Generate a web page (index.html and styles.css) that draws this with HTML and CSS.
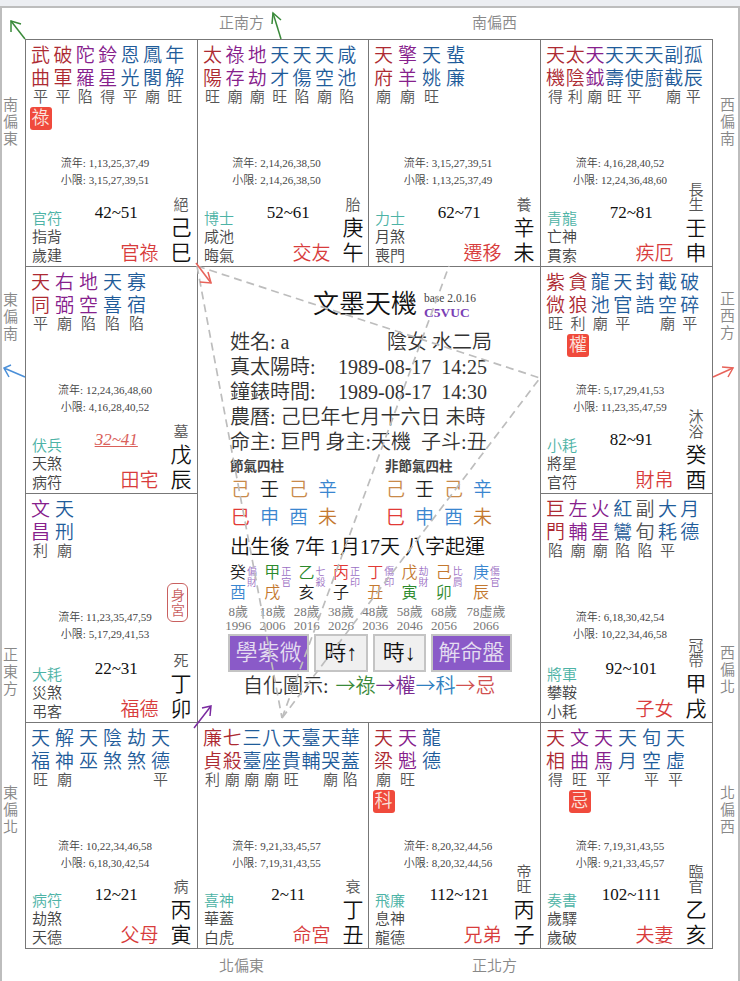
FILE: index.html
```html
<!DOCTYPE html>
<html lang="zh-Hant">
<head>
<meta charset="utf-8">
<title>文墨天機</title>
<link rel="stylesheet" href="styles.css">
</head>
<body>
<div class="frame">
  <div class="corner"></div>
  <div class="compass-h"><span>正南方</span><span>南偏西</span></div>
  <div class="corner"></div>

  <div class="compass-v left">
    <div class="slot t58"><span>南偏東</span></div>
    <div class="slot t25"><span>東偏南</span></div>
    <div class="slot t153"><span>正東方</span></div>
    <div class="slot t62"><span>東偏北</span></div>
  </div>

  <div class="chart">
    <section class="cell">
      <div class="stars g7">
        <div class="star red"><span class="nm">武曲</span><span class="br">平</span><span class="hua">祿</span></div>
        <div class="star red"><span class="nm">破軍</span><span class="br">平</span></div>
        <div class="star pur"><span class="nm">陀羅</span><span class="br">陷</span></div>
        <div class="star pur"><span class="nm">鈴星</span><span class="br">得</span></div>
        <div class="star blu"><span class="nm">恩光</span><span class="br">平</span></div>
        <div class="star blu"><span class="nm">鳳閣</span><span class="br">廟</span></div>
        <div class="star blu"><span class="nm">年解</span><span class="br">旺</span></div>
      </div>
      <p class="nums">流年: 1,13,25,37,49<br>小限: 3,15,27,39,51</p>
      <div class="foot">
        <div class="gods"><span class="teal">官符</span><span>指背</span><span>歲建</span></div>
        <div class="mid"><span class="decade">42~51</span><span class="palace">官祿</span></div>
        <div class="side"><span class="phase">絕</span><span class="gz">己巳</span></div>
      </div>
    </section>
    <section class="cell">
      <div class="stars g7">
        <div class="star red"><span class="nm">太陽</span><span class="br">旺</span></div>
        <div class="star pur"><span class="nm">祿存</span><span class="br">廟</span></div>
        <div class="star pur"><span class="nm">地劫</span><span class="br">廟</span></div>
        <div class="star blu"><span class="nm">天才</span><span class="br">旺</span></div>
        <div class="star blu"><span class="nm">天傷</span><span class="br">陷</span></div>
        <div class="star blu"><span class="nm">天空</span><span class="br">廟</span></div>
        <div class="star blu"><span class="nm">咸池</span><span class="br">陷</span></div>
      </div>
      <p class="nums">流年: 2,14,26,38,50<br>小限: 2,14,26,38,50</p>
      <div class="foot">
        <div class="gods"><span class="teal">博士</span><span>咸池</span><span>晦氣</span></div>
        <div class="mid"><span class="decade">52~61</span><span class="palace">交友</span></div>
        <div class="side"><span class="phase">胎</span><span class="gz">庚午</span></div>
      </div>
    </section>
    <section class="cell">
      <div class="stars">
        <div class="star red"><span class="nm">天府</span><span class="br">廟</span></div>
        <div class="star pur"><span class="nm">擎羊</span><span class="br">廟</span></div>
        <div class="star blu"><span class="nm">天姚</span><span class="br">旺</span></div>
        <div class="star blu"><span class="nm">蜚廉</span><span class="br">&nbsp;</span></div>
      </div>
      <p class="nums">流年: 3,15,27,39,51<br>小限: 1,13,25,37,49</p>
      <div class="foot">
        <div class="gods"><span class="teal">力士</span><span>月煞</span><span>喪門</span></div>
        <div class="mid"><span class="decade">62~71</span><span class="palace">遷移</span></div>
        <div class="side"><span class="phase">養</span><span class="gz">辛未</span></div>
      </div>
    </section>
    <section class="cell">
      <div class="stars g8">
        <div class="star red"><span class="nm">天機</span><span class="br">得</span></div>
        <div class="star red"><span class="nm">太陰</span><span class="br">利</span></div>
        <div class="star pur"><span class="nm">天鉞</span><span class="br">廟</span></div>
        <div class="star blu"><span class="nm">天壽</span><span class="br">旺</span></div>
        <div class="star blu"><span class="nm">天使</span><span class="br">平</span></div>
        <div class="star blu"><span class="nm">天廚</span><span class="br">&nbsp;</span></div>
        <div class="star blu"><span class="nm">副截</span><span class="br">廟</span></div>
        <div class="star blu"><span class="nm">孤辰</span><span class="br">平</span></div>
      </div>
      <p class="nums">流年: 4,16,28,40,52<br>小限: 12,24,36,48,60</p>
      <div class="foot">
        <div class="gods"><span class="teal">青龍</span><span>亡神</span><span>貫索</span></div>
        <div class="mid"><span class="decade">72~81</span><span class="palace">疾厄</span></div>
        <div class="side"><span class="phase">長生</span><span class="gz">壬申</span></div>
      </div>
    </section>

    <section class="cell">
      <div class="stars">
        <div class="star red"><span class="nm">天同</span><span class="br">平</span></div>
        <div class="star pur"><span class="nm">右弼</span><span class="br">廟</span></div>
        <div class="star pur"><span class="nm">地空</span><span class="br">陷</span></div>
        <div class="star blu"><span class="nm">天喜</span><span class="br">陷</span></div>
        <div class="star blu"><span class="nm">寡宿</span><span class="br">陷</span></div>
      </div>
      <p class="nums">流年: 12,24,36,48,60<br>小限: 4,16,28,40,52</p>
      <div class="foot">
        <div class="gods"><span class="teal">伏兵</span><span>天煞</span><span>病符</span></div>
        <div class="mid"><span class="decade now">32~41</span><span class="palace">田宅</span></div>
        <div class="side"><span class="phase">墓</span><span class="gz">戊辰</span></div>
      </div>
    </section>

    <main class="center">
      <header class="title-row">
        <h1 class="title">文墨天機</h1>
        <div class="ver"><span class="base">base 2.0.16</span><span class="code">C5VUC</span></div>
      </header>
      <div class="info">
        <div class="name-row"><span>姓名: a</span><span>陰女 水二局</span></div>
        <div class="time-row"><span>真太陽時:</span><span>1989-08-17&nbsp;&nbsp;14:25</span></div>
        <div class="time-row"><span>鐘錶時間:</span><span>1989-08-17&nbsp;&nbsp;14:30</span></div>
        <div>農曆: 己巳年七月十六日 未時</div>
        <div>命主: 巨門 身主:天機&nbsp;&nbsp;子斗:丑</div>
      </div>
      <div class="pillars">
        <div class="pgroup">
          <h2>節氣四柱</h2>
          <div class="pgrid">
            <span class="earth">己</span><span class="dark">壬</span><span class="earth">己</span><span class="water">辛</span>
            <span class="fire">巳</span><span class="water">申</span><span class="water">酉</span><span class="earth2">未</span>
          </div>
        </div>
        <div class="pgroup">
          <h2>非節氣四柱</h2>
          <div class="pgrid">
            <span class="earth">己</span><span class="dark">壬</span><span class="earth">己</span><span class="water">辛</span>
            <span class="fire">巳</span><span class="water">申</span><span class="water">酉</span><span class="earth2">未</span>
          </div>
        </div>
      </div>
      <div class="qiyun">出生後 7年 1月17天 八字起運</div>
      <div class="luck">
        <div class="lk"><div class="lk-top"><span class="lk-gz"><span class="dark">癸</span><span class="water">酉</span></span><span class="tag">偏財</span></div><span class="age">8歲<br>1996</span></div>
        <div class="lk"><div class="lk-top"><span class="lk-gz"><span class="wood">甲</span><span class="earth2">戌</span></span><span class="tag">正官</span></div><span class="age">18歲<br>2006</span></div>
        <div class="lk"><div class="lk-top"><span class="lk-gz"><span class="wood">乙</span><span class="dark">亥</span></span><span class="tag">七殺</span></div><span class="age">28歲<br>2016</span></div>
        <div class="lk"><div class="lk-top"><span class="lk-gz"><span class="fire">丙</span><span class="dark">子</span></span><span class="tag">正印</span></div><span class="age">38歲<br>2026</span></div>
        <div class="lk"><div class="lk-top"><span class="lk-gz"><span class="fire">丁</span><span class="earth2">丑</span></span><span class="tag">傷印</span></div><span class="age">48歲<br>2036</span></div>
        <div class="lk"><div class="lk-top"><span class="lk-gz"><span class="earth2">戊</span><span class="wood">寅</span></span><span class="tag">劫財</span></div><span class="age">58歲<br>2046</span></div>
        <div class="lk"><div class="lk-top"><span class="lk-gz"><span class="earth2">己</span><span class="wood">卯</span></span><span class="tag">比肩</span></div><span class="age">68歲<br>2056</span></div>
        <div class="lk last"><div class="lk-top"><span class="lk-gz"><span class="water">庚</span><span class="earth2">辰</span></span><span class="tag">傷官</span></div><span class="age">78虛歲<br>2066</span></div>
      </div>
      <div class="btns">
        <button class="btn purple" type="button">學紫微</button>
        <button class="btn plain" type="button">時↑</button>
        <button class="btn plain" type="button">時↓</button>
        <button class="btn purple" type="button">解命盤</button>
      </div>
      <div class="legend">自化圖示: <span class="lg-g">→祿</span><span class="lg-p">→權</span><span class="lg-b">→科</span><span class="lg-r">→忌</span></div>
    </main>

    <section class="cell">
      <div class="stars g7">
        <div class="star red"><span class="nm">紫微</span><span class="br">旺</span></div>
        <div class="star red"><span class="nm">貪狼</span><span class="br">利</span><span class="hua">權</span></div>
        <div class="star blu"><span class="nm">龍池</span><span class="br">廟</span></div>
        <div class="star blu"><span class="nm">天官</span><span class="br">平</span></div>
        <div class="star blu"><span class="nm">封誥</span><span class="br">&nbsp;</span></div>
        <div class="star blu"><span class="nm">截空</span><span class="br">廟</span></div>
        <div class="star blu"><span class="nm">破碎</span><span class="br">平</span></div>
      </div>
      <p class="nums">流年: 5,17,29,41,53<br>小限: 11,23,35,47,59</p>
      <div class="foot">
        <div class="gods"><span class="teal">小耗</span><span>將星</span><span>官符</span></div>
        <div class="mid"><span class="decade">82~91</span><span class="palace">財帛</span></div>
        <div class="side"><span class="phase">沐浴</span><span class="gz">癸酉</span></div>
      </div>
    </section>

    <section class="cell">
      <div class="stars">
        <div class="star pur"><span class="nm">文昌</span><span class="br">利</span></div>
        <div class="star blu"><span class="nm">天刑</span><span class="br">廟</span></div>
      </div>
      <span class="shen">身宮</span>
      <p class="nums">流年: 11,23,35,47,59<br>小限: 5,17,29,41,53</p>
      <div class="foot">
        <div class="gods"><span class="teal">大耗</span><span>災煞</span><span>弔客</span></div>
        <div class="mid"><span class="decade">22~31</span><span class="palace">福德</span></div>
        <div class="side"><span class="phase">死</span><span class="gz">丁卯</span></div>
      </div>
    </section>

    <section class="cell">
      <div class="stars g7">
        <div class="star red"><span class="nm">巨門</span><span class="br">陷</span></div>
        <div class="star pur"><span class="nm">左輔</span><span class="br">廟</span></div>
        <div class="star pur"><span class="nm">火星</span><span class="br">廟</span></div>
        <div class="star blu"><span class="nm">紅鸞</span><span class="br">陷</span></div>
        <div class="star gry"><span class="nm">副旬</span><span class="br">陷</span></div>
        <div class="star blu"><span class="nm">大耗</span><span class="br">平</span></div>
        <div class="star blu"><span class="nm">月德</span><span class="br">&nbsp;</span></div>
      </div>
      <p class="nums">流年: 6,18,30,42,54<br>小限: 10,22,34,46,58</p>
      <div class="foot">
        <div class="gods"><span class="teal">將軍</span><span>攀鞍</span><span>小耗</span></div>
        <div class="mid"><span class="decade">92~101</span><span class="palace">子女</span></div>
        <div class="side"><span class="phase">冠帶</span><span class="gz">甲戌</span></div>
      </div>
    </section>

    <section class="cell">
      <div class="stars">
        <div class="star blu"><span class="nm">天福</span><span class="br">旺</span></div>
        <div class="star blu"><span class="nm">解神</span><span class="br">廟</span></div>
        <div class="star blu"><span class="nm">天巫</span><span class="br">&nbsp;</span></div>
        <div class="star blu"><span class="nm">陰煞</span><span class="br">&nbsp;</span></div>
        <div class="star blu"><span class="nm">劫煞</span><span class="br">&nbsp;</span></div>
        <div class="star blu"><span class="nm">天德</span><span class="br">平</span></div>
      </div>
      <p class="nums">流年: 10,22,34,46,58<br>小限: 6,18,30,42,54</p>
      <div class="foot">
        <div class="gods"><span class="teal">病符</span><span>劫煞</span><span>天德</span></div>
        <div class="mid"><span class="decade">12~21</span><span class="palace">父母</span></div>
        <div class="side"><span class="phase">病</span><span class="gz">丙寅</span></div>
      </div>
    </section>
    <section class="cell">
      <div class="stars g8">
        <div class="star red"><span class="nm">廉貞</span><span class="br">利</span></div>
        <div class="star red"><span class="nm">七殺</span><span class="br">廟</span></div>
        <div class="star blu"><span class="nm">三臺</span><span class="br">廟</span></div>
        <div class="star blu"><span class="nm">八座</span><span class="br">廟</span></div>
        <div class="star blu"><span class="nm">天貴</span><span class="br">旺</span></div>
        <div class="star blu"><span class="nm">臺輔</span><span class="br">&nbsp;</span></div>
        <div class="star blu"><span class="nm">天哭</span><span class="br">廟</span></div>
        <div class="star blu"><span class="nm">華蓋</span><span class="br">陷</span></div>
      </div>
      <p class="nums">流年: 9,21,33,45,57<br>小限: 7,19,31,43,55</p>
      <div class="foot">
        <div class="gods"><span class="teal">喜神</span><span>華蓋</span><span>白虎</span></div>
        <div class="mid"><span class="decade">2~11</span><span class="palace">命宮</span></div>
        <div class="side"><span class="phase">衰</span><span class="gz">丁丑</span></div>
      </div>
    </section>
    <section class="cell">
      <div class="stars">
        <div class="star red"><span class="nm">天梁</span><span class="br">廟</span><span class="hua">科</span></div>
        <div class="star pur"><span class="nm">天魁</span><span class="br">旺</span></div>
        <div class="star blu"><span class="nm">龍德</span><span class="br">&nbsp;</span></div>
      </div>
      <p class="nums">流年: 8,20,32,44,56<br>小限: 8,20,32,44,56</p>
      <div class="foot">
        <div class="gods"><span class="teal">飛廉</span><span>息神</span><span>龍德</span></div>
        <div class="mid"><span class="decade">112~121</span><span class="palace">兄弟</span></div>
        <div class="side"><span class="phase">帝旺</span><span class="gz">丙子</span></div>
      </div>
    </section>
    <section class="cell">
      <div class="stars">
        <div class="star red"><span class="nm">天相</span><span class="br">得</span></div>
        <div class="star pur"><span class="nm">文曲</span><span class="br">旺</span><span class="hua">忌</span></div>
        <div class="star pur"><span class="nm">天馬</span><span class="br">平</span></div>
        <div class="star blu"><span class="nm">天月</span><span class="br">&nbsp;</span></div>
        <div class="star blu"><span class="nm">旬空</span><span class="br">平</span></div>
        <div class="star blu"><span class="nm">天虛</span><span class="br">平</span></div>
      </div>
      <p class="nums">流年: 7,19,31,43,55<br>小限: 9,21,33,45,57</p>
      <div class="foot">
        <div class="gods"><span class="teal">奏書</span><span>歲驛</span><span>歲破</span></div>
        <div class="mid"><span class="decade">102~111</span><span class="palace">夫妻</span></div>
        <div class="side"><span class="phase">臨官</span><span class="gz">乙亥</span></div>
      </div>
    </section>
  </div>

  <div class="compass-v right">
    <div class="slot t58"><span>西偏南</span></div>
    <div class="slot t24"><span>正西方</span></div>
    <div class="slot t151"><span>西偏北</span></div>
    <div class="slot t62"><span>北偏西</span></div>
  </div>

  <div class="corner"></div>
  <div class="compass-h bottom"><span>北偏東</span><span>正北方</span></div>
  <div class="corner"></div>
</div>

<svg class="overlay" width="740" height="981" viewBox="0 0 740 981" aria-hidden="true">
  <g class="dash">
    <path d="M197 266L282 718"/>
    <path d="M282 718L449 266"/>
    <path d="M282 718L540 378"/>
    <path d="M197 266L540 378"/>
  </g>
  <g class="arrow a-green">
    <path d="M25 39L11 21"/><path d="M11 32L11 21L21 24"/>
    <path d="M281 39L273 13"/><path d="M272 24L273 13L281 20"/>
  </g>
  <g class="arrow a-red">
    <path d="M196 263L211 283"/><path d="M200 282L211 283L208 272"/>
    <path d="M713 377L733 368"/><path d="M722 367L733 368L728 377"/>
  </g>
  <path class="arrow a-blue" d="M25 377L4 368M9 377L4 368L11 365"/>
  <path class="arrow a-purple" d="M194 728L211 706M202 708L211 706L210 716"/>
</svg>
</body>
</html>
```

FILE: styles.css
```css
* { box-sizing: border-box; }
html, body { margin: 0; padding: 0; }
body {
  position: relative;
  width: 740px;
  height: 981px;
  overflow: hidden;
  background: #eceef2;
  padding-top: 6px;
  font-family: "Liberation Serif", "Noto Sans CJK TC", serif;
  font-weight: 350;
  color: #333;
}
.frame {
  height: 975px;
  background: #fff;
  border: solid #bdbdbd;
  border-width: 2px 2px 0 2px;
  display: grid;
  grid-template-columns: 23px 688px 25px;
  grid-template-rows: 31px 910px 1fr;
}
.compass-h {
  display: flex;
  gap: 208px;
  padding-left: 194px;
  padding-top: 7px;
  font-size: 15px;
  line-height: 17px;
  color: #888;
}
.compass-h.bottom { padding-top: 9px; }
.compass-v {
  display: grid;
  grid-template-rows: 228px 227px 229px 226px;
  font-size: 15px;
  line-height: 17px;
  color: #888;
}
.compass-v.left .slot { margin-left: 1px; }
.compass-v.right .slot { margin-left: 7px; }
.slot span { display: block; width: 1em; }
.t24 { padding-top: 24px; }
.t25 { padding-top: 25px; }
.t58 { padding-top: 58px; }
.t62 { padding-top: 62px; }
.t151 { padding-top: 151px; }
.t153 { padding-top: 153px; }

.chart {
  display: grid;
  grid-template-columns: 172px 171px 172px 172px;
  grid-template-rows: 227px 227px 229px 226px;
  border-top: 1px solid #777;
  border-left: 1px solid #777;
  background: #fff;
}
.cell {
  position: relative;
  display: flex;
  flex-direction: column;
  border-right: 1px solid #777;
  border-bottom: 1px solid #777;
  padding: 4px 0 0 5px;
  min-width: 0;
}
.stars {
  flex: none;
  display: flex;
  gap: 5px;
  height: 111px;
}
.stars.g7 { gap: 3.4px; }
.stars.g8 { gap: 0.7px; }
.star {
  width: 19px;
  display: flex;
  flex-direction: column;
  align-items: center;
}
.nm {
  display: block;
  width: 19px;
  font-size: 19px;
  line-height: 23px;
}
.br {
  font-size: 15px;
  line-height: 17px;
  color: #555;
  margin-top: -1px;
}
.red .nm { color: #ad2a32; }
.pur .nm { color: #86208c; }
.blu .nm { color: #1f5c9a; }
.gry .nm { color: #555; }
.hua {
  display: block;
  flex: none;
  width: 22px;
  height: 23px;
  margin-top: 1px;
  border-radius: 3px;
  background: #f04a3c;
  color: #fbe3dc;
  font-size: 18px;
  line-height: 23px;
  text-align: center;
}
.nums {
  flex: none;
  margin: 0;
  padding-right: 18px;
  font-size: 11px;
  line-height: 16.5px;
  color: #444;
  text-align: center;
}
.foot {
  flex: none;
  height: 70px;
  display: flex;
  align-items: flex-end;
  margin-top: auto;
}
.gods {
  flex: none;
  width: 31px;
  margin-bottom: 1px;
  padding-left: 1px;
  display: flex;
  flex-direction: column;
  font-size: 15px;
  line-height: 18.5px;
  color: #444;
}
.gods .teal { color: #4db3a6; }
.mid {
  flex: none;
  width: 108.5px;
  display: flex;
  flex-direction: column;
  align-items: center;
}
.decade {
  font-size: 17px;
  line-height: 20px;
  color: #111;
  margin-bottom: 18px;
}
.decade.now {
  color: #d9605a;
  font-style: italic;
  text-decoration: underline;
}
.palace {
  align-self: flex-end;
  padding-right: 12px;
  font-size: 19px;
  line-height: 25px;
  color: #d83c3c;
}
.side {
  flex: none;
  width: 21px;
  display: flex;
  flex-direction: column;
  align-items: center;
}
.phase {
  display: block;
  width: 15px;
  font-size: 15px;
  line-height: 14.5px;
  color: #555;
  margin-bottom: 4px;
}
.gz {
  display: block;
  width: 21px;
  font-size: 21px;
  line-height: 25px;
  color: #111;
}
.shen {
  position: absolute;
  left: 141px;
  top: 89px;
  width: 21px;
  height: 39px;
  padding: 4px 3px;
  border: 1px solid #c9605f;
  border-radius: 6px;
  color: #c9605f;
  font-size: 14px;
  line-height: 15px;
}

.center {
  grid-column: 2 / 4;
  grid-row: 2 / 4;
  border-right: 1px solid #777;
  border-bottom: 1px solid #777;
  padding: 23px 0 0 32px;
}
.title-row {
  display: flex;
  align-items: center;
  height: 30px;
  margin: 0 0 10px 83px;
}
.title {
  margin: 0;
  font-size: 26px;
  font-weight: 350;
  line-height: 30px;
  color: #111;
}
.ver {
  display: flex;
  flex-direction: column;
  margin-left: 7px;
}
.base { font-size: 11.5px; line-height: 14px; color: #444; }
.code { font-size: 13.5px; line-height: 15px; font-weight: bold; color: #7a3fb5; }
.info { font-size: 20px; line-height: 25px; color: #333; white-space: nowrap; }
.name-row { display: flex; }
.name-row span:first-child { width: 157px; }
.time-row { display: flex; }
.time-row span:first-child { width: 108px; }
.pillars { display: flex; margin-top: 3px; }
.pgroup { width: 159px; }
.pgroup h2 {
  margin: 0 0 1px;
  font-size: 13.5px;
  font-weight: bold;
  line-height: 17px;
  color: #444;
}
.pgrid {
  display: grid;
  grid-template-columns: repeat(4, 29px);
  grid-auto-rows: 28px;
  font-size: 19px;
  line-height: 28px;
  padding-left: 1px;
}
.earth { color: #c98a4a; }
.earth2 { color: #c4782f; }
.dark { color: #222; }
.water { color: #3a86d0; }
.fire { color: #e23a36; }
.wood { color: #2c8a2c; }
.qiyun { margin-top: 2.5px; font-size: 20px; line-height: 25px; color: #111; white-space: nowrap; }
.luck {
  display: flex;
  margin: 3.5px 0 0 -9px;
}
.lk {
  flex: none;
  width: 34.3px;
  display: flex;
  flex-direction: column;
}
.lk.last { width: 50px; }
.lk-top { display: flex; padding-left: 9px; height: 42px; }
.lk.last .lk-top { padding-left: 12px; }
.lk-gz {
  flex: none;
  display: block;
  width: 16px;
  font-size: 16px;
  line-height: 20px;
}
.lk-gz span { display: block; }
.tag {
  flex: none;
  display: block;
  width: 10px;
  margin-left: 1px;
  margin-top: 3px;
  font-size: 10px;
  line-height: 11px;
  color: #9b6fc4;
}
.age {
  display: block;
  font-size: 13px;
  line-height: 14px;
  color: #777;
  text-align: center;
  white-space: nowrap;
}
.btns {
  display: flex;
  gap: 5px;
  margin: 1px 0 0 -2px;
  height: 38px;
}
.btn {
  font-family: inherit;
  font-weight: 350;
  padding: 0;
  margin: 0;
  height: 38px;
  font-size: 22px;
  line-height: 34px;
  border: 2px solid #c4c4c4;
}
.btn.purple { width: 81px; background: #8a5ac8; color: #e4ddf0; }
.btn.plain { width: 53.5px; background: #f0f0f0; color: #111; }
.legend {
  margin: -0.5px 0 0 13px;
  font-size: 20px;
  line-height: 25px;
  color: #333;
  white-space: nowrap;
}
.legend span { font-family: "Noto Sans CJK TC", sans-serif; }
.lg-g { color: #3a8a3a; margin-left: 2px; }
.lg-p { color: #7a2a90; }
.lg-b { color: #2f7fc0; }
.lg-r { color: #d05050; }

.overlay {
  position: absolute;
  left: 0;
  top: 0;
  pointer-events: none;
}
.dash path {
  fill: none;
  stroke: #bdbdbd;
  stroke-width: 1.7;
  stroke-dasharray: 8 5;
}
.arrow, .arrow path { fill: none; stroke-width: 1.5; }
.a-green { stroke: #3a8a3a; }
.a-red { stroke: #e8635a; }
.a-blue { stroke: #4a8fd8; }
.a-purple { stroke: #7a2aa0; }
```
